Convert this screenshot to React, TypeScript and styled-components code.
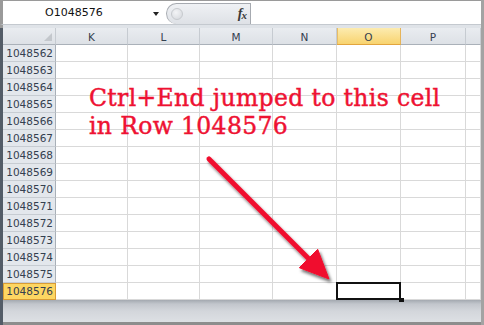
import React from "react";
import styled, { createGlobalStyle, css } from "styled-components";

const Global = createGlobalStyle`
  html, body { margin: 0; padding: 0; background: #fff; }
  body { width: 484px; height: 325px; overflow: hidden; font-family: "DejaVu Sans", sans-serif; }
`;

const Window = styled.div`
  position: relative;
  width: 484px;
  height: 325px;
  box-sizing: border-box;
  display: flex;
  flex-direction: column;
  border-right: 3px solid #a3a3a3;
  background: #fff;
  overflow: hidden;
`;

const FormulaBar = styled.div`
  display: flex;
  align-items: flex-end;
  height: 25px;
  box-sizing: border-box;
  border-top: 1px solid #9a9a9a;
  border-bottom: 1px solid #c4c9cf;
  border-left: 3px solid #9a9a9a;
  background: #fff;
`;

const NameBox = styled.div`
  width: 160px;
  height: 100%;
  display: flex;
  align-items: center;
  box-sizing: border-box;
  padding-left: 42px;
  font-size: 11px;
  color: #111;
`;

const DropArrow = styled.span`
  margin-left: auto;
  margin-right: 4px;
  margin-top: 2px;
  width: 0;
  height: 0;
  border-left: 3.5px solid transparent;
  border-right: 3.5px solid transparent;
  border-top: 4px solid #222;
`;

const FxPill = styled.div`
  margin-left: 3px;
  width: 85px;
  height: 21px;
  box-sizing: border-box;
  display: flex;
  align-items: center;
  justify-content: space-between;
  padding: 0 4px 0 4px;
  border: 1px solid #a6aab0;
  border-bottom: none;
  border-radius: 11px 0 0 11px;
  background: linear-gradient(#eff1f4, #dee1e6);
`;

const PillKnob = styled.span`
  width: 10px;
  height: 10px;
  border-radius: 50%;
  background: radial-gradient(circle at 40% 35%, #f3f4f6, #d3d6db);
  border: 1px solid #c7cace;
`;

const FxLabel = styled.span`
  font-family: "Liberation Serif", serif;
  font-style: italic;
  font-weight: bold;
  font-size: 14px;
  color: #3a3a3a;
  letter-spacing: -1px;
  & > small {
    font-size: 11px;
    position: relative;
    top: 1px;
  }
`;

const FormulaInput = styled.div`
  flex: 1;
  height: 100%;
  background: #fff;
`;

const Band = styled.div`
  height: 3px;
  background: #dfe3e8;
  border-left: 3px solid #9a9a9a;
`;

const Sheet = styled.div`
  flex: 1;
  display: flex;
  flex-direction: column;
  border-left: 3px solid #535c67;
`;

const Grid = styled.div`
  display: grid;
  grid-template-columns: 53px 72px 72px 73px 64px 64px 65px 15px;
  grid-auto-rows: 17px;
  position: relative;
  z-index: 2;
`;

const headerText = css`
  box-sizing: border-box;
  display: flex;
  align-items: center;
  font-size: 10.5px;
  color: #34404f;
`;

const ColHeader = styled.div<{ $active?: boolean }>`
  ${headerText};
  justify-content: center;
  padding-top: 1px;
  border-right: 1px solid #c6cbd1;
  border-bottom: 1px solid #aab1b9;
  background: linear-gradient(#e9ecf0, #dde1e6);
  ${(p) =>
    p.$active &&
    css`
      background: linear-gradient(#fcebb0, #f8d36f);
      border-right-color: #e6b45a;
      border-bottom: 1px solid #e2a53e;
      box-shadow: inset 1px 0 0 #e8bd66;
    `}
`;

const Corner = styled(ColHeader)`
  position: relative;
  &::after {
    content: "";
    position: absolute;
    right: 3px;
    bottom: 3px;
    width: 8px;
    height: 8px;
    background: #c3c7cc;
    clip-path: polygon(100% 0, 100% 100%, 0 100%);
  }
`;

const RowHeader = styled.div<{ $active?: boolean }>`
  ${headerText};
  justify-content: flex-end;
  padding-right: 2px;
  border-right: 1px solid #a9b0b8;
  border-bottom: 1px solid #c7ccd2;
  background: #e3e7ec;
  ${(p) =>
    p.$active &&
    css`
      background: #fdd662;
      border-right-color: #d99c35;
      border-bottom-color: #d99c35;
      box-shadow: inset 0 1px 0 #d99c35, inset 1px 0 0 #d99c35;
    `}
`;

const Cell = styled.div<{ $selected?: boolean }>`
  box-sizing: border-box;
  border-right: 1px solid #d9d9d9;
  border-bottom: 1px solid #d9d9d9;
  background: #fff;
  ${(p) =>
    p.$selected &&
    css`
      position: relative;
      &::before {
        content: "";
        position: absolute;
        left: -1px;
        top: -1px;
        width: 65px;
        height: 18px;
        box-sizing: border-box;
        border: 2px solid #111;
      }
      &::after {
        content: "";
        position: absolute;
        left: 62px;
        top: 15px;
        width: 5px;
        height: 4px;
        background: #111;
      }
    `}
`;

const Footer = styled.div`
  flex: 1;
  background: linear-gradient(#a4a9b0 0px, #c2c6cc 4px, #d3d6db 11px, #dde0e4 100%);
  border-bottom: 3px solid #8d8d8d;
`;

const Callout = styled.div`
  position: absolute;
  left: 89px;
  top: 84px;
  font-family: "DejaVu Serif", serif;
  font-size: 23.5px;
  letter-spacing: 0.35px;
  -webkit-text-stroke: 0.45px #ee1232;
  line-height: 28px;
  color: #ee1232;
  white-space: pre;
  z-index: 5;
`;

const ArrowLayer = styled.svg`
  position: absolute;
  left: 0;
  top: 0;
  width: 484px;
  height: 325px;
  z-index: 6;
  pointer-events: none;
`;

const columns = ["K", "L", "M", "N", "O", "P", ""];
const rows = Array.from({ length: 15 }, (_, i) => 1048562 + i);
const ACTIVE_COL = "O";
const ACTIVE_ROW = 1048576;

export default function App() {
  return (
    <>
      <Global />
      <Window>
        <FormulaBar>
          <NameBox>
            O1048576
            <DropArrow />
          </NameBox>
          <FxPill>
            <PillKnob />
            <FxLabel>
              f<small>x</small>
            </FxLabel>
          </FxPill>
          <FormulaInput />
        </FormulaBar>
        <Band />
        <Sheet>
          <Grid>
            <Corner />
            {columns.map((c, i) => (
              <ColHeader key={i} $active={c === ACTIVE_COL}>
                {c}
              </ColHeader>
            ))}
            {rows.map((r) => (
              <React.Fragment key={r}>
                <RowHeader $active={r === ACTIVE_ROW}>{r}</RowHeader>
                {columns.map((c, i) => (
                  <Cell key={i} $selected={r === ACTIVE_ROW && c === ACTIVE_COL} />
                ))}
              </React.Fragment>
            ))}
          </Grid>
          <Footer />
        </Sheet>
        <Callout>{"Ctrl+End jumped to this cell\nin Row 1048576"}</Callout>
        <ArrowLayer viewBox="0 0 484 325">
          <defs>
            <filter id="arrowShadow" x="-20%" y="-20%" width="140%" height="140%">
              <feDropShadow dx="2" dy="3" stdDeviation="1.6" floodColor="#000" floodOpacity="0.55" />
            </filter>
          </defs>
          <g filter="url(#arrowShadow)" fill="#f0112f" stroke="#f0112f">
            <line x1="209" y1="159" x2="310" y2="260" strokeWidth="5" strokeLinecap="round" />
            <polygon points="329,279 299.3,267.7 317.7,249.3" strokeWidth="1" strokeLinejoin="round" />
          </g>
        </ArrowLayer>
      </Window>
    </>
  );
}
